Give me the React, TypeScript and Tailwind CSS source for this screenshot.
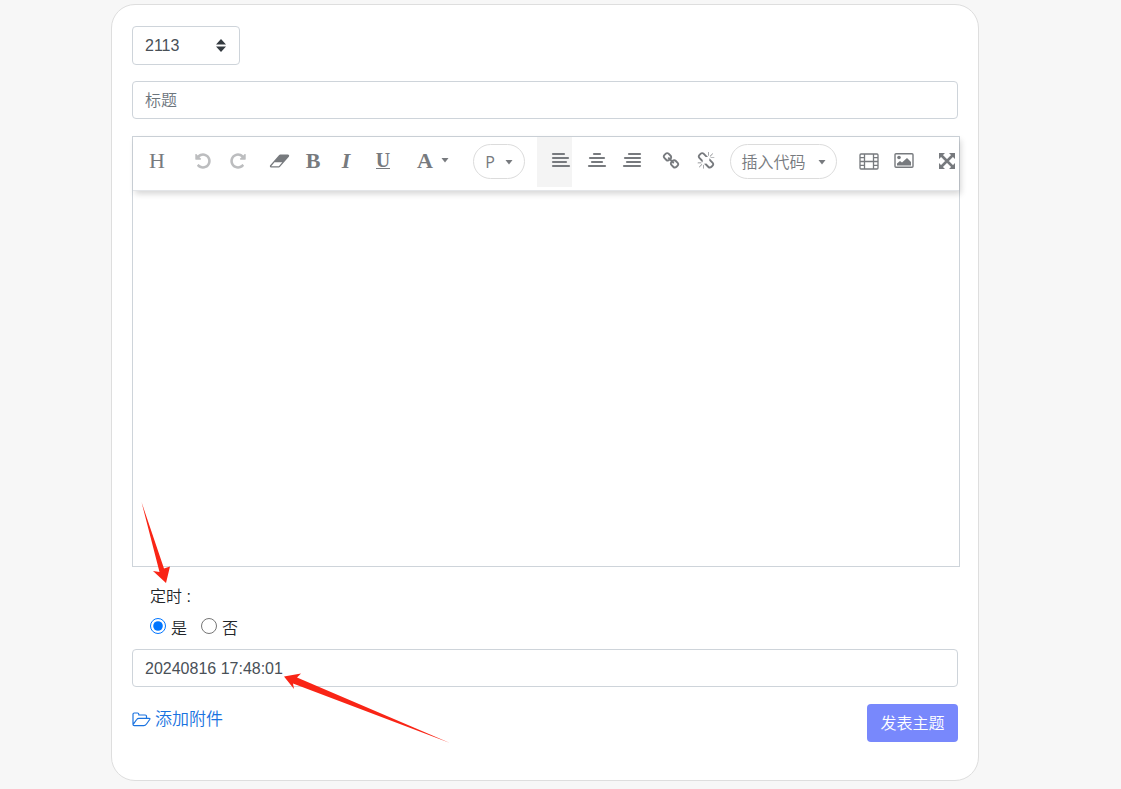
import type { ReactNode } from "react"

const iconPaths = {
  undo: "M1664 896q0 156-61 298t-164 245-245 164-298 61q-172 0-327-72.5t-264-204.5q-7-10-6.5-22.5t8.5-20.5l137-138q10-9 25-9 16 2 23 12 73 95 179 147t225 52q104 0 198.5-40.5t163.5-109.5 109.5-163.5 40.5-198.5-40.5-198.5-109.5-163.5-163.5-109.5-198.5-40.5q-98 0-188 35.5t-160 101.5l137 138q31 30 14 69-17 40-59 40h-448q-26 0-45-19t-19-45v-448q0-42 40-59 39-17 69 14l130 129q107-101 244.5-156.5t284.5-55.5q156 0 298 61t245 164 164 245 61 298z",
  eraser: "M960 1408l336-384h-768l-336 384h768zm1013-1077q15 34 9.5 71.5t-30.5 65.5l-896 1024q-38 44-96 44h-768q-38 0-69.5-20.5t-47.5-54.5q-15-34-9.5-71.5t30.5-65.5l896-1024q38-44 96-44h768q38 0 69.5 20.5t47.5 54.5z",
  link: "M1520 1216q0-40-28-68l-208-208q-28-28-68-28-42 0-72 32 3 3 19 18.5t21.5 21.5 15 19 13 25.5 3.5 27.5q0 40-28 68t-68 28q-15 0-27.5-3.5t-25.5-13-19-15-21.5-21.5-18.5-19q-33 31-33 73 0 40 28 68l206 207q27 27 68 27 40 0 68-26l147-146q28-28 28-67zm-703-705q0-40-28-68l-206-207q-28-28-68-28-39 0-68 27l-147 146q-28 28-28 67 0 40 28 68l208 208q27 27 68 27 42 0 72-31-3-3-19-18.5t-21.5-21.5-15-19-13-25.5-3.5-27.5q0-40 28-68t68-28q15 0 27.5 3.5t25.5 13 19 15 21.5 21.5 18.5 19q33-31 33-73zm895 705q0 120-85 203l-147 146q-83 83-203 83-121 0-204-85l-206-207q-83-83-83-203 0-123 88-209l-88-88q-86 88-208 88-120 0-204-84l-208-208q-84-84-84-204t85-203l147-146q83-83 203-83 121 0 204 85l206 207q83 83 83 203 0 123-88 209l88 88q86-88 208-88 120 0 204 84l208 208q84 84 84 204z",
  unlink: "M503 1271l-256 256q-10 9-23 9-12 0-23-9-9-10-9-23t9-23l256-256q10-9 23-9t23 9q9 10 9 23t-9 23zm169 41v320q0 14-9 23t-23 9-23-9-9-23v-320q0-14 9-23t23-9 23 9 9 23zm-224-224q0 14-9 23t-23 9h-320q-14 0-23-9t-9-23 9-23 23-9h320q14 0 23 9t9 23zm1264 128q0 120-85 203l-147 146q-83 83-203 83-121 0-204-85l-334-335q-21-21-42-56l239-18 273 274q28 28 68 27.5t68-27.5l147-146q28-28 28-67 0-40-28-68l-274-275 18-239q35 21 56 42l336 336q84 86 84 204zm-617-724l-239 18-273-274q-28-28-68-28-39 0-68 27l-147 146q-28 28-28 67 0 40 28 68l274 274-18 240q-35-21-56-42l-336-336q-84-86-84-204 0-120 85-203l147-146q83-83 203-83 121 0 204 85l334 335q21 21 42 56zm633 84q0 14-9 23t-23 9h-320q-14 0-23-9t-9-23 9-23 23-9h320q14 0 23 9t9 23zm-544-544v320q0 14-9 23t-23 9-23-9-9-23v-320q0-14 9-23t23-9 23 9 9 23zm407 151l-256 256q-11 9-23 9t-23-9q-9-10-9-23t9-23l256-256q10-9 23-9t23 9q9 10 9 23t-9 23z",
}

function Icon({ path, className, viewBox = "0 0 1792 1792" }: { path: string; className: string; viewBox?: string }) {
  return (
    <svg viewBox={viewBox} className={className} fill="currentColor" aria-hidden="true">
      <path d={path} />
    </svg>
  )
}

function Caret() {
  return (
    <svg viewBox="0 0 8 5" className="h-[5px] w-2 shrink-0" fill="currentColor" aria-hidden="true">
      <path d="M.5 0h7L4 4.500z" />
    </svg>
  )
}

function Lines({ rows }: { rows: [number, number][] }) {
  return (
    <svg viewBox="0 0 18 14" className="h-[14px] w-[18px] overflow-visible" stroke="currentColor" strokeWidth="2.200" strokeLinecap="round" aria-hidden="true">
      {rows.map(([x1, x2], i) => (
        <path key={i} d={`M${x1} ${1 + i * 4}H${x2}`} />
      ))}
    </svg>
  )
}

function ToolButton({ label, className, children }: { label: string; className: string; children: ReactNode }) {
  return (
    <button type="button" aria-label={label} className={`flex h-12 shrink-0 items-center justify-center ${className}`}>
      {children}
    </button>
  )
}

function Toolbar() {
  return (
    <div className="flex h-[54px] items-start border-b border-[#e3e5e8] text-[#777a7e] shadow-[2px_3px_6px_rgba(0,0,0,0.16)]">
      <ToolButton label="标题" className="w-12 pb-[2px]">
        <span className="font-['Liberation_Serif',serif] text-[22px]">H</span>
      </ToolButton>
      <ToolButton label="撤销" className="ml-1 w-[35px] text-[#bcbdbf]">
        <Icon path={iconPaths.undo} className="size-[18px]" />
      </ToolButton>
      <ToolButton label="重做" className="w-[35px] text-[#bcbdbf]">
        <Icon path={iconPaths.undo} className="size-[18px] -scale-x-100" />
      </ToolButton>
      <ToolButton label="清除格式" className="ml-[7px] w-[35px]">
        <Icon path={iconPaths.eraser} viewBox="0 0 2048 1792" className="h-[18px] w-[21px]" />
      </ToolButton>
      <ToolButton label="加粗" className="w-8 pb-[2px]">
        <span className="font-['Liberation_Serif',serif] text-[22px] font-bold">B</span>
      </ToolButton>
      <ToolButton label="斜体" className="w-[34px] pb-[2px]">
        <span className="font-['Liberation_Serif',serif] text-[22px] font-bold italic">I</span>
      </ToolButton>
      <ToolButton label="下划线" className="w-10 pb-[2px]">
        <span className="border-b border-current font-['Liberation_Serif',serif] text-[20px] leading-4 font-bold">U</span>
      </ToolButton>
      <ToolButton label="文字颜色" className="w-[60px] gap-2 pb-[2px]">
        <span className="font-['Liberation_Serif',serif] text-[22px] font-bold">A</span>
        <Caret />
      </ToolButton>
      <button type="button" className="mt-[7px] ml-[10px] flex h-[35px] w-[52px] shrink-0 items-center justify-center gap-[10px] rounded-full border border-[#dcdcdc] pt-px font-['Open_Sans',sans-serif] text-base">
        P
        <Caret />
      </button>
      <button type="button" aria-label="左对齐" className="ml-3 flex h-[50px] w-[35px] shrink-0 items-center justify-end bg-[#f4f4f4] pr-[2px] pb-1">
        <Lines rows={[[1, 12], [1, 16], [1, 14], [1, 17]]} />
      </button>
      <ToolButton label="居中" className="ml-[7px] w-[35px] pb-[2px]">
        <Lines rows={[[6, 12], [2, 16], [4, 14], [1, 17]]} />
      </ToolButton>
      <ToolButton label="右对齐" className="w-[35px] pb-[2px]">
        <Lines rows={[[6, 17], [2, 17], [4, 17], [1, 17]]} />
      </ToolButton>
      <ToolButton label="链接" className="ml-1 w-[35px]">
        <Icon path={iconPaths.link} className="size-[18px]" />
      </ToolButton>
      <ToolButton label="取消链接" className="w-[35px]">
        <Icon path={iconPaths.unlink} className="size-[18px]" />
      </ToolButton>
      <button type="button" className="mt-[7px] ml-[7px] flex h-[35px] w-[107px] shrink-0 items-center justify-center gap-3 rounded-full border border-[#dcdcdc] pt-[2px] text-base font-[350]">
        插入代码
        <Caret />
      </button>
      <ToolButton label="视频" className="ml-[14px] w-[35px]">
        <svg viewBox="0 0 20 17" className="h-[17px] w-5" fill="none" stroke="currentColor" strokeWidth="1.3" aria-hidden="true">
          <rect x="1" y="1" width="18" height="15" rx="1" />
          <path d="M5.5 1v15M14.5 1v15M1 4.7h4.5M1 8.5h18M1 12.3h4.5M14.5 4.7H19M14.5 12.3H19" />
        </svg>
      </ToolButton>
      <ToolButton label="图片" className="w-[35px] pb-px">
        <svg viewBox="0 0 20 15" className="h-[15px] w-5" aria-hidden="true">
          <rect x="1" y="0.7" width="18" height="13.6" rx="1" fill="none" stroke="currentColor" strokeWidth="1.4" />
          <circle cx="5" cy="4.5" r="1.8" fill="currentColor" />
          <path d="M3 12.500v-2l3-2.500 2 1.500 5-4.500 4 4v3.500z" fill="currentColor" />
        </svg>
      </ToolButton>
      <ToolButton label="全屏" className="ml-auto w-[25px]">
        <svg viewBox="0 0 16 16" className="size-4" fill="currentColor" aria-hidden="true">
          <path d="M0 0h6L0 6zM16 0v6L10 0zM16 16h-6l6-6zM0 16v-6L6 16z" />
          <path d="M2 2l12 12M14 2L2 14" stroke="currentColor" strokeWidth="2.600" />
        </svg>
      </ToolButton>
    </div>
  )
}

export default function App() {
  return (
    <main className="min-h-screen bg-[#f7f7f7] pt-1 pb-2 font-['Liberation_Sans','Noto_Sans_CJK_SC',sans-serif] text-base text-[#212529]">
      <form className="mr-[142px] ml-[111px] rounded-[24px] border border-[#dedede] bg-white px-5 pt-[21px] pb-[38px]">
        <div className="relative w-[108px]">
          <select aria-label="版块" className="h-[39px] w-full appearance-none rounded border border-[#ced4da] bg-white px-3 text-[#495057]">
            <option>2113</option>
          </select>
          <svg viewBox="0 0 10 13" className="pointer-events-none absolute top-[13px] right-[14px] h-[13px] w-[10px]" fill="#343a40" aria-hidden="true">
            <path d="M0 5.500h10L5 0zM0 7.500h10L5 13z" />
          </svg>
        </div>

        <input
          type="text"
          aria-label="标题"
          placeholder="标题"
          className="mt-4 block h-[38px] w-full rounded border border-[#ced4da] px-3 pt-[2px] font-[350] text-[#495057] placeholder:text-[#6c757d]"
        />

        <div className="mt-[17px] -mr-[2px] border border-[#ced4da]">
          <Toolbar />
          <div contentEditable suppressContentEditableWarning role="textbox" aria-label="正文" className="h-[375px] outline-none" />
        </div>

        <div className="relative">
          <fieldset className="pl-[18px]">
            <legend className="pt-[18px] leading-6 font-[350]">定时 :</legend>
            <div className="mt-2 flex h-6 items-center">
              <input id="timed-yes" name="timed" type="radio" defaultChecked className="mb-[6px] size-4 accent-[#0075ff]" />
              <label htmlFor="timed-yes" className="ml-[5px] font-[350]">是</label>
              <input id="timed-no" name="timed" type="radio" className="mb-[6px] ml-[14px] size-4" />
              <label htmlFor="timed-no" className="ml-[5px] font-[350]">否</label>
            </div>
          </fieldset>
          <svg viewBox="0 0 30 82" className="pointer-events-none absolute -top-[65px] left-[9px] h-[82px] w-[30px]" fill="#f92516" aria-hidden="true">
            <path d="M0.500 0L23 66.500l6-2L25 81 12 69l6.500 1z" />
          </svg>
        </div>

        <div className="relative mt-2">
          <input
            type="text"
            aria-label="定时时间"
            defaultValue="20240816 17:48:01"
            className="block h-[38px] w-full rounded border border-[#ced4da] px-3 pt-[2px] text-[#495057]"
          />
          <svg viewBox="0 0 166 70" className="pointer-events-none absolute top-[24px] left-[152px] h-[70px] w-[166px]" fill="#f92516" aria-hidden="true">
            <path d="M0 3.500L17 0.500l-4 4L166 70 9 10.500l1 5.500z" />
          </svg>
        </div>

        <div className="mt-[17px] flex items-start justify-between">
          <a href="#attachments" className="flex h-[30px] items-center gap-1 text-[17px] font-[350] text-[#1a73e0]">
            <svg viewBox="0 0 19 15" className="h-[15px] w-[19px]" fill="none" stroke="currentColor" strokeWidth="1.200" strokeLinejoin="round" aria-hidden="true">
              <path d="M1 12.500V2.300Q1 1 2.300 1h3.200q1.300 0 1.300 1.300v.7h6.400q1.300 0 1.300 1.300v2M1 12.700L4.700 7.500Q5.500 6.300 7 6.300h10q1.500 0 .7 1.200L14.500 12q-1.200 1.700-2.700 1.700H2.300Q1 13.700 1 12.500" />
            </svg>
            <span className="pt-[2px]">添加附件</span>
          </a>
          <button type="submit" className="h-[38px] min-w-[91px] rounded bg-[#7888fc] px-3 pt-[2px] font-[350] text-white">
            发表主题
          </button>
        </div>
      </form>
    </main>
  )
}
